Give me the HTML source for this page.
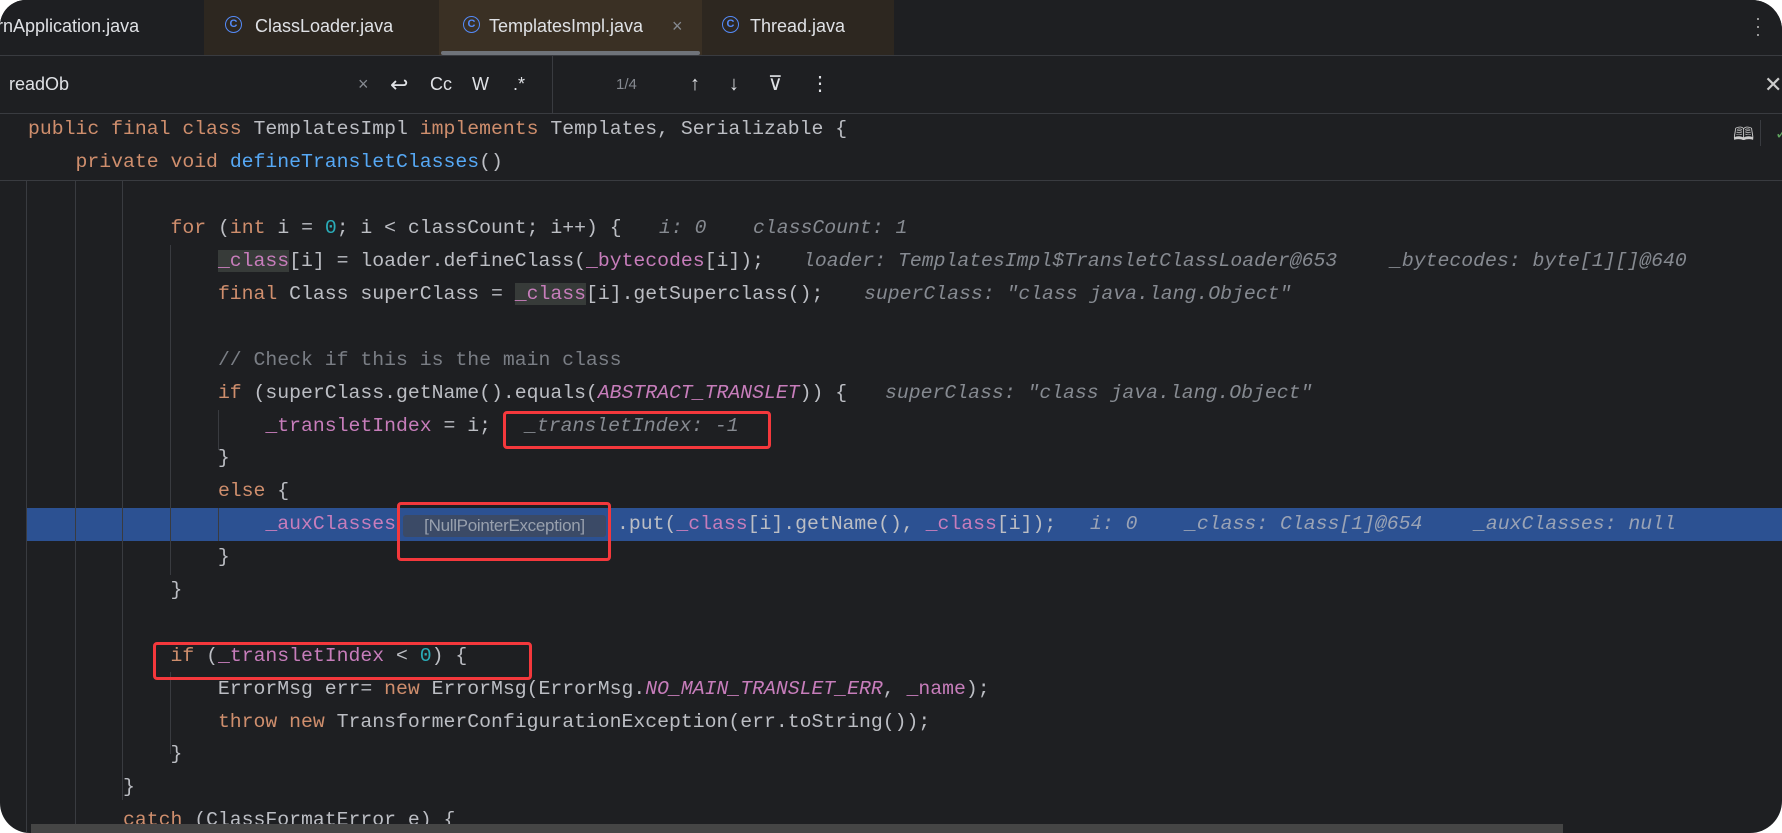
<!DOCTYPE html>
<html><head><meta charset="utf-8"><style>
html,body{margin:0;padding:0;background:#fff;}
#w{position:relative;width:1782px;height:833px;background:#1e1f22;border-radius:26px 30px 32px 30px;overflow:hidden;font-family:"Liberation Sans",sans-serif;}
.tabbar{position:absolute;left:0;top:0;width:1782px;height:55px;background:#1e1f22;border-bottom:1px solid #393b40;}
.tab{position:absolute;top:0;height:55px;color:#dfe1e5;font-size:18px;line-height:52px;}
.ic{position:absolute;top:16px;width:17px;height:17px;border:1.6px solid #548af7;border-radius:50%;box-sizing:border-box;color:#548af7;font-size:11px;line-height:14px;text-align:center;font-weight:bold;}
.search{position:absolute;left:0;top:56px;width:1782px;height:57px;border-bottom:1px solid #393b40;color:#dfe1e5;}
.s{position:absolute;top:0;line-height:57px;font-size:18px;}
.code{position:absolute;left:0;top:0;width:1782px;height:833px;font-family:"Liberation Mono",monospace;font-size:19.8px;}
.ln{position:absolute;left:28px;height:33px;line-height:33px;white-space:pre;color:#bcbec4;}
.k{color:#cf8e6d}.m{color:#56a8f5}.f{color:#c77dbb}.n{color:#2aacb8}.c{color:#7a7e85}.sf{color:#c77dbb;font-style:italic}
.h{position:absolute;height:33px;line-height:33px;white-space:pre;color:#868a91;font-style:italic;font-family:"Liberation Mono",monospace;font-size:19.8px;}
.u{background:#373b39}
.g{position:absolute;width:1px;background:#393b40;}
.red{position:absolute;border:3px solid #f4383c;border-radius:4px;box-sizing:border-box;}
</style></head><body><div id="w">
<div class="tabbar">
 <div class="tab" style="left:0;width:204px;background:#1e1f22"><span style="position:absolute;left:-3px">rnApplication.java</span></div>
 <div class="tab" style="left:204px;width:235px;background:#2d2720"><div class="ic" style="left:21px">C</div><span style="position:absolute;left:51px">ClassLoader.java</span></div>
 <div class="tab" style="left:439px;width:263px;background:#3a3024"><div class="ic" style="left:24px">C</div><span style="position:absolute;left:50px">TemplatesImpl.java</span><span style="position:absolute;left:233px;color:#868a91">×</span><div style="position:absolute;left:2px;top:51px;width:259px;height:4px;border-radius:2px;background:#6f737a"></div></div>
 <div class="tab" style="left:702px;width:192px;background:#2d2720"><div class="ic" style="left:20px">C</div><span style="position:absolute;left:48px">Thread.java</span></div>
 <div style="position:absolute;left:1755px;top:14px;color:#aaa;font-size:18px;line-height:8px">·<br>·<br>·</div>
</div>
<div class="search">
 <span class="s" style="left:9px">readOb</span>
 <span class="s" style="left:358px;color:#868a91">×</span>
 <span class="s" style="left:390px;font-size:22px">↩</span>
 <span class="s" style="left:430px">Cc</span>
 <span class="s" style="left:472px">W</span>
 <span class="s" style="left:513px">.*</span>
 <div style="position:absolute;left:552px;top:0;width:1px;height:57px;background:#393b40"></div>
 <span class="s" style="left:616px;color:#868a91;font-size:15px">1/4</span>
 <span class="s" style="left:690px;font-size:20px">↑</span>
 <span class="s" style="left:729px;font-size:20px">↓</span>
 <span class="s" style="left:768px;font-size:20px">⊽</span>
 <span class="s" style="left:810px;font-size:20px">⋮</span>
 <span class="s" style="left:1764px;font-size:22px;color:#ccc">✕</span>
</div>
<div style="position:absolute;left:0;top:180px;width:1782px;height:1px;background:#393b40"></div>
<div style="position:absolute;left:26px;top:508px;width:1756px;height:33px;background:#2c5192"></div>
<div class="g" style="left:26px;top:180px;height:653px"></div>
<div class="g" style="left:75px;top:180px;height:653px"></div>
<div class="g" style="left:122px;top:180px;height:620px"></div>
<div class="g" style="left:170px;top:245px;height:330px"></div>
<div class="g" style="left:170px;top:672px;height:82px"></div>
<div class="g" style="left:218px;top:410px;height:40px"></div>
<div class="g" style="left:218px;top:508px;height:33px"></div>
<div style="position:absolute;left:1733px;top:122px;color:#ccc;font-size:18px">🕮</div>
<div style="position:absolute;left:1760px;top:120px;width:1px;height:26px;background:#393b40"></div>
<div style="position:absolute;left:1775px;top:124px;color:#5fa35f;font-size:16px">✓</div>
<div class="code">
<div class="ln" style="top:113px"><span class="k">public final class</span> TemplatesImpl <span class="k">implements</span> Templates, Serializable {</div>
<div class="ln" style="top:146px">    <span class="k">private void</span> <span class="m">defineTransletClasses</span>()</div>
<div class="ln" style="top:212px">            <span class="k">for</span> (<span class="k">int</span> i = <span class="n">0</span>; i &lt; classCount; i++) {</div>
<div class="ln" style="top:245px">                <span class="f u">_class</span>[i] = loader.defineClass(<span class="f">_bytecodes</span>[i]);</div>
<div class="ln" style="top:278px">                <span class="k">final</span> Class superClass = <span class="f u">_class</span>[i].getSuperclass();</div>
<div class="ln" style="top:344px">                <span class="c">// Check if this is the main class</span></div>
<div class="ln" style="top:377px">                <span class="k">if</span> (superClass.getName().equals(<span class="sf">ABSTRACT_TRANSLET</span>)) {</div>
<div class="ln" style="top:410px">                    <span class="f">_transletIndex</span> = i;</div>
<div class="ln" style="top:442px">                }</div>
<div class="ln" style="top:475px">                <span class="k">else</span> {</div>
<div class="ln" style="top:508px">                    <span class="f">_auxClasses</span></div>
<div class="ln" style="top:508px;left:617px">.put(<span class="f">_class</span>[i].getName(), <span class="f">_class</span>[i]);</div>
<div class="ln" style="top:541px">                }</div>
<div class="ln" style="top:574px">            }</div>
<div class="ln" style="top:640px">            <span class="k">if</span> (<span class="f">_transletIndex</span> &lt; <span class="n">0</span>) {</div>
<div class="ln" style="top:673px">                ErrorMsg err= <span class="k">new</span> ErrorMsg(ErrorMsg.<span class="sf">NO_MAIN_TRANSLET_ERR</span>, <span class="f">_name</span>);</div>
<div class="ln" style="top:706px">                <span class="k">throw new</span> TransformerConfigurationException(err.toString());</div>
<div class="ln" style="top:738px">            }</div>
<div class="ln" style="top:771px">        }</div>
<div class="ln" style="top:804px">        <span class="k">catch</span> (ClassFormatError e) {</div>
</div>
<div class="h" style="left:659px;top:212px">i: 0</div>
<div class="h" style="left:753px;top:212px">classCount: 1</div>
<div class="h" style="left:803px;top:245px">loader: TemplatesImpl$TransletClassLoader@653</div>
<div class="h" style="left:1390px;top:245px">_bytecodes: byte[1][]@640</div>
<div class="h" style="left:864px;top:278px">superClass: "class java.lang.Object"</div>
<div class="h" style="left:885px;top:377px">superClass: "class java.lang.Object"</div>
<div class="h" style="left:525px;top:410px">_transletIndex: -1</div>
<div class="h" style="left:1090px;top:508px;color:#9aa3b5">i: 0</div>
<div class="h" style="left:1185px;top:508px;color:#9aa3b5">_class: Class[1]@654</div>
<div class="h" style="left:1474px;top:508px;color:#9aa3b5">_auxClasses: null</div>
<div style="position:absolute;left:403px;top:515px;width:203px;height:22px;background:#3b4a66;border-radius:3px;color:#98a0ad;font-size:17px;line-height:22px;text-align:center;letter-spacing:-0.3px">[NullPointerException]</div>
<div class="red" style="left:503px;top:411px;width:268px;height:38px"></div>
<div class="red" style="left:397px;top:502px;width:214px;height:59px"></div>
<div class="red" style="left:153px;top:642px;width:379px;height:38px"></div>
<div style="position:absolute;left:31px;top:824px;width:1532px;height:9px;background:#454545"></div>
</div></body></html>
